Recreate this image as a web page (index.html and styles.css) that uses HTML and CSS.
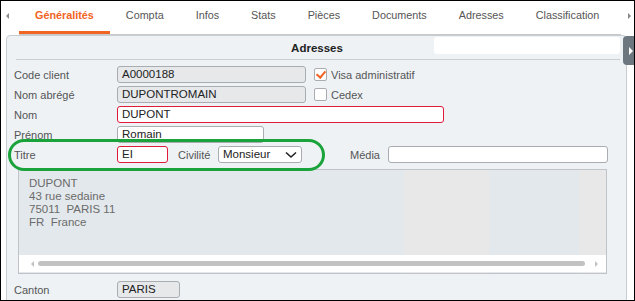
FILE: index.html
```html
<!DOCTYPE html>
<html lang="fr">
<head>
    <meta charset="UTF-8">
    <title>Fiche client</title>
    <link rel="stylesheet" href="styles.css">
</head>
<body>
    <div class="frame">
        <div class="tabbar">
            <span class="tab-arrow left"></span>
            <div class="tabs">
                <span class="tab active">Généralités</span>
                <span class="tab">Compta</span>
                <span class="tab">Infos</span>
                <span class="tab">Stats</span>
                <span class="tab">Pièces</span>
                <span class="tab">Documents</span>
                <span class="tab">Adresses</span>
                <span class="tab">Classification</span>
            </div>
            <span class="tab-arrow right"></span>
        </div>

        <div class="panel">
            <div class="side-toggle"><span></span></div>
            <div class="panel-head">
                <h2>Adresses</h2>
                <div class="search"></div>
            </div>

            <div class="form">
                <div class="row">
                    <label>Code client</label>
                    <div class="field ro w-long">A0000188</div>
                    <span class="check on"></span><span class="check-label">Visa administratif</span>
                </div>
                <div class="row">
                    <label>Nom abrégé</label>
                    <div class="field ro w-long">DUPONTROMAIN</div>
                    <span class="check"></span><span class="check-label">Cedex</span>
                </div>
                <div class="row">
                    <label>Nom</label>
                    <div class="field req w-nom">DUPONT</div>
                </div>
                <div class="row">
                    <label>Prénom</label>
                    <div class="field w-prenom">Romain</div>
                </div>
                <div class="row">
                    <label>Titre</label>
                    <div class="field req w-titre">EI</div>
                    <span class="inline-label civ">Civilité</span>
                    <div class="field select">Monsieur
                        <svg width="12" height="8" viewBox="0 0 12 8"><path d="M1 1.5 L6 6 L11 1.5" fill="none" stroke="#222" stroke-width="1.6"/></svg>
                    </div>
                    <span class="inline-label media">Média</span>
                    <div class="field w-media"></div>
                </div>

                <div class="address">
                    <div class="address-text">
                        DUPONT<br>
                        43 rue sedaine<br>
                        75011&nbsp; PARIS 11<br>
                        FR&nbsp; France
                    </div>
                    <div class="scrollbar">
                        <span class="sb-arrow left"></span>
                        <span class="sb-thumb"></span>
                        <span class="sb-arrow right"></span>
                    </div>
                </div>

                <div class="row">
                    <label>Canton</label>
                    <div class="field ro w-canton">PARIS</div>
                </div>
            </div>
            <div class="highlight"></div>
        </div>
    </div>
</body>
</html>
```

FILE: styles.css
```css
body {
    margin: 0;
    font-family: "Liberation Sans", Arial, sans-serif;
    font-size: 11px;
    color: #222;
    background: #fff;
}
.frame {
    width: 635px;
    height: 301px;
    box-sizing: border-box;
    border: 1px solid #000;
    overflow: hidden;
    position: relative;
}

/* Tabs */
.tabbar {
    display: flex;
    align-items: center;
    height: 33px;
}
.tabs {
    display: flex;
    height: 33px;
    border-bottom: 1px solid #c9c9c9;
    width: 602px;
    margin-left: 10px;
}
.tab {
    padding: 0 16px;
    line-height: 29px;
    font-size: 10.8px;
    color: #555;
    border-bottom: 3px solid transparent;
    white-space: nowrap;
}
.tab.active {
    color: #f06424;
    font-weight: bold;
    border-bottom-color: #f06424;
}
.tab-arrow {
    width: 0;
    height: 0;
    border-top: 3px solid transparent;
    border-bottom: 3px solid transparent;
}
.tab-arrow.left {
    margin-left: 5px;
    border-right: 3px solid #888;
    margin-top: -4px;
}
.tab-arrow.right {
    margin-left: 7px;
    border-left: 3px solid #888;
    margin-top: -4px;
}

/* Panel */
.panel {
    position: relative;
    margin: 1px 0 0 5px;
    width: 619px;
    height: 280px;
    background: #eef2f5;
    border: 1px solid #c8cdd2;
    border-radius: 4px;
}
.side-toggle {
    position: absolute;
    right: -10px;
    top: 0;
    width: 13px;
    height: 29px;
    background: #6d7780;
    border-radius: 4px 0 0 4px;
    display: flex;
    align-items: center;
    justify-content: center;
}
.side-toggle span {
    width: 0;
    height: 0;
    border-top: 4px solid transparent;
    border-bottom: 4px solid transparent;
    border-left: 4px solid #fff;
    margin-left: 3px;
}
.panel-head {
    display: flex;
    align-items: center;
    height: 23px;
    margin: 0 6px 0 9px;
    border-bottom: 1px solid #c8cdd2;
}
.panel-head h2 {
    flex: 1;
    margin: 0;
    font-size: 11.5px;
    text-align: center;
    padding-left: 184px;
    color: #222;
}
.search {
    width: 186px;
    height: 17px;
    background: #fff;
    border-radius: 3px;
    margin-top: -4px;
}

/* Form */
.form {
    padding: 6px 0 0 7px;
}
.row {
    display: flex;
    align-items: center;
    height: 17px;
    margin-bottom: 3px;
}
.row label {
    width: 103px;
    color: #555;
}
.field {
    box-sizing: border-box;
    height: 17px;
    line-height: 15px;
    padding: 0 4px;
    border: 1px solid #a9adb1;
    border-radius: 3px;
    background: #fff;
    white-space: nowrap;
    font-size: 11.5px;
}
.field.ro {
    background: #e6e8ea;
}
.field.req {
    border-color: #e01b3c;
}
.w-long { width: 189px; }
.w-nom { width: 327px; }
.w-prenom { width: 147px; }
.w-titre { width: 51px; }
.w-canton { width: 63px; }
.w-media { width: 220px; }

.check {
    box-sizing: border-box;
    width: 13px;
    height: 13px;
    margin-left: 8px;
    border: 1px solid #a9adb1;
    border-radius: 2px;
    background: #fff;
    position: relative;
}
.check.on::after {
    content: "";
    position: absolute;
    left: 3px;
    top: 0px;
    width: 4px;
    height: 7px;
    border: solid #f06424;
    border-width: 0 2px 2px 0;
    transform: rotate(40deg);
}
.check-label {
    margin-left: 4px;
    color: #555;
}
.inline-label {
    color: #555;
}
.inline-label.civ {
    margin-left: 10px;
    width: 40px;
}
.field.select {
    width: 84px;
    display: flex;
    align-items: center;
    justify-content: space-between;
    color: #222;
}
.inline-label.media {
    margin-left: 48px;
    width: 38px;
}

/* Address block */
.address {
    margin: 6px 0 7px 4px;
    width: 589px;
    height: 105px;
    box-sizing: border-box;
    border: 1px solid #c0c4c8;
    background: linear-gradient(90deg, #e3e8ec 0 385px, #e8e8e8 385px 470px, #e3e8ec 470px 560px, #e8e8e8 560px);
    display: flex;
    flex-direction: column;
}
.address-text {
    flex: 1;
    padding: 7px 0 0 10px;
    line-height: 13px;
    color: #6b6b6b;
    font-size: 11.5px;
}
.scrollbar {
    height: 17px;
    margin-bottom: 1px;
    background: #fff;
    display: flex;
    align-items: center;
    padding: 0 8px 0 12px;
}
.sb-thumb {
    flex: 1;
    height: 5px;
    border-radius: 3px;
    background: #c2c2c2;
    margin: 0 10px 0 4px;
}
.sb-arrow {
    width: 0;
    height: 0;
    border-top: 3px solid transparent;
    border-bottom: 3px solid transparent;
}
.sb-arrow.left { border-right: 3px solid #c2c2c2; }
.sb-arrow.right { border-left: 3px solid #c2c2c2; }

/* Green annotation */
.highlight {
    position: absolute;
    left: 1px;
    top: 103px;
    width: 311px;
    height: 26px;
    border: 3px solid #1aa33a;
    border-radius: 16px;
    pointer-events: none;
}
```
